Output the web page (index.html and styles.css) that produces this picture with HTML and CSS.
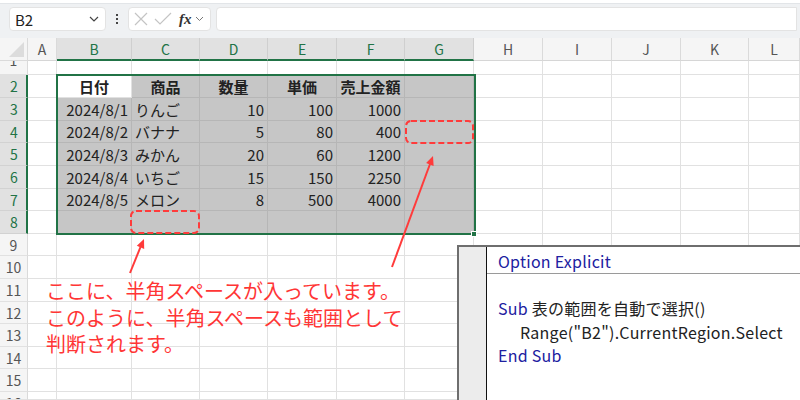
FILE: index.html
```html
<!DOCTYPE html>
<html lang="ja">
<head>
<meta charset="utf-8">
<link rel="stylesheet" href="styles.css">
</head>
<body>
<div class="app">
  <div class="topbar">
    <div class="namebox">
      <span class="nb-text">B2</span>
      <svg class="chev" width="10" height="6" viewBox="0 0 10 6"><polyline points="1,1 5,5 9,1" fill="none" stroke="#444" stroke-width="1.2"/></svg>
    </div>
    <div class="vdots"><i></i><i></i><i></i></div>
    <div class="fxbox">
      <svg width="16" height="14" viewBox="0 0 16 14"><path d="M2 1 L14 13 M14 1 L2 13" stroke="#c4c4c4" stroke-width="1.2" fill="none"/></svg>
      <svg width="18" height="14" viewBox="0 0 18 14"><polyline points="1,7 6,12 17,1" stroke="#c4c4c4" stroke-width="1.2" fill="none"/></svg>
      <span class="fx">fx</span>
      <svg class="chev-s" width="9" height="6" viewBox="0 0 9 6"><polyline points="1,1 4.5,4.5 8,1" fill="none" stroke="#777" stroke-width="1"/></svg>
    </div>
    <div class="formula"></div>
  </div>

  <div class="sheetwrap">
    <div class="sheet">
      <div class="corner"><span class="tri"></span></div>
      <div class="ch">A</div><div class="ch on">B</div><div class="ch on">C</div><div class="ch on">D</div><div class="ch on">E</div><div class="ch on">F</div><div class="ch on">G</div><div class="ch">H</div><div class="ch">I</div><div class="ch">J</div><div class="ch">K</div><div class="ch">L</div>

      <div class="rh r1"><span>1</span></div><div class="c"></div><div class="c"></div><div class="c"></div><div class="c"></div><div class="c"></div><div class="c"></div><div class="c"></div><div class="c"></div><div class="c"></div><div class="c"></div><div class="c"></div><div class="c"></div>

      <div class="rh on">2</div><div class="c"></div><div class="c hd act">日付</div><div class="c s hd">商品</div><div class="c s hd">数量</div><div class="c s hd">単価</div><div class="c s hd">売上金額</div><div class="c s"></div><div class="c"></div><div class="c"></div><div class="c"></div><div class="c"></div><div class="c"></div>

      <div class="rh on">3</div><div class="c"></div><div class="c s n">2024/8/1</div><div class="c s t">りんご</div><div class="c s n">10</div><div class="c s n">100</div><div class="c s n">1000</div><div class="c s"></div><div class="c"></div><div class="c"></div><div class="c"></div><div class="c"></div><div class="c"></div>

      <div class="rh on">4</div><div class="c"></div><div class="c s n">2024/8/2</div><div class="c s t">バナナ</div><div class="c s n">5</div><div class="c s n">80</div><div class="c s n">400</div><div class="c s"></div><div class="c"></div><div class="c"></div><div class="c"></div><div class="c"></div><div class="c"></div>

      <div class="rh on">5</div><div class="c"></div><div class="c s n">2024/8/3</div><div class="c s t">みかん</div><div class="c s n">20</div><div class="c s n">60</div><div class="c s n">1200</div><div class="c s"></div><div class="c"></div><div class="c"></div><div class="c"></div><div class="c"></div><div class="c"></div>

      <div class="rh on">6</div><div class="c"></div><div class="c s n">2024/8/4</div><div class="c s t">いちご</div><div class="c s n">15</div><div class="c s n">150</div><div class="c s n">2250</div><div class="c s"></div><div class="c"></div><div class="c"></div><div class="c"></div><div class="c"></div><div class="c"></div>

      <div class="rh on">7</div><div class="c"></div><div class="c s n">2024/8/5</div><div class="c s t">メロン</div><div class="c s n">8</div><div class="c s n">500</div><div class="c s n">4000</div><div class="c s"></div><div class="c"></div><div class="c"></div><div class="c"></div><div class="c"></div><div class="c"></div>

      <div class="rh on">8</div><div class="c"></div><div class="c s"></div><div class="c s"></div><div class="c s"></div><div class="c s"></div><div class="c s"></div><div class="c s"></div><div class="c"></div><div class="c"></div><div class="c"></div><div class="c"></div><div class="c"></div>

      <div class="rh">9</div><div class="c"></div><div class="c"></div><div class="c"></div><div class="c"></div><div class="c"></div><div class="c"></div><div class="c"></div><div class="c"></div><div class="c"></div><div class="c"></div><div class="c"></div><div class="c"></div>
      <div class="rh">10</div><div class="c"></div><div class="c"></div><div class="c"></div><div class="c"></div><div class="c"></div><div class="c"></div><div class="c"></div><div class="c"></div><div class="c"></div><div class="c"></div><div class="c"></div><div class="c"></div>
      <div class="rh">11</div><div class="c"></div><div class="c"></div><div class="c"></div><div class="c"></div><div class="c"></div><div class="c"></div><div class="c"></div><div class="c"></div><div class="c"></div><div class="c"></div><div class="c"></div><div class="c"></div>
      <div class="rh">12</div><div class="c"></div><div class="c"></div><div class="c"></div><div class="c"></div><div class="c"></div><div class="c"></div><div class="c"></div><div class="c"></div><div class="c"></div><div class="c"></div><div class="c"></div><div class="c"></div>
      <div class="rh">13</div><div class="c"></div><div class="c"></div><div class="c"></div><div class="c"></div><div class="c"></div><div class="c"></div><div class="c"></div><div class="c"></div><div class="c"></div><div class="c"></div><div class="c"></div><div class="c"></div>
      <div class="rh">14</div><div class="c"></div><div class="c"></div><div class="c"></div><div class="c"></div><div class="c"></div><div class="c"></div><div class="c"></div><div class="c"></div><div class="c"></div><div class="c"></div><div class="c"></div><div class="c"></div>
      <div class="rh">15</div><div class="c"></div><div class="c"></div><div class="c"></div><div class="c"></div><div class="c"></div><div class="c"></div><div class="c"></div><div class="c"></div><div class="c"></div><div class="c"></div><div class="c"></div><div class="c"></div>
      <div class="rh last"><span>16</span></div><div class="c"></div><div class="c"></div><div class="c"></div><div class="c"></div><div class="c"></div><div class="c"></div><div class="c"></div><div class="c"></div><div class="c"></div><div class="c"></div><div class="c"></div><div class="c"></div>
    </div>

    <div class="selbox"></div>
    <div class="handle"></div>

    <svg class="annot" width="800" height="400" viewBox="0 0 800 400">
      <rect x="131" y="211" width="68" height="22" rx="5" ry="5" fill="none" stroke="#ff3b3b" stroke-width="2" stroke-dasharray="6 3"/>
      <rect x="406" y="121" width="67" height="22" rx="5" ry="5" fill="none" stroke="#ff3b3b" stroke-width="2" stroke-dasharray="6 3"/>
      <line x1="130" y1="273" x2="140.5" y2="247" stroke="#ff3b3b" stroke-width="2"/>
      <polygon points="144,239 144.2,249 136.8,245.7" fill="#ff3b3b"/>
      <line x1="392" y1="267" x2="430" y2="164" stroke="#ff3b3b" stroke-width="2"/>
      <polygon points="433,156 433.6,166 426.1,163" fill="#ff3b3b"/>
    </svg>

    <div class="note">ここに、半角スペースが入っています。<br>このように、半角スペースも範囲として<br>判断されます。</div>

    <div class="vbe">
      <div class="margin"></div>
      <div class="code">
        <div class="decl"><span class="kw">Option Explicit</span></div>
        <div class="ln">&nbsp;</div>
        <div class="ln"><span class="kw">Sub</span> 表の範囲を自動で選択()</div>
        <div class="ln ind">Range("B2").CurrentRegion.Select</div>
        <div class="ln"><span class="kw">End Sub</span></div>
      </div>
    </div>
  </div>
</div>
</body>
</html>
```

FILE: styles.css
```css
* { box-sizing: border-box; }
html, body {
  margin: 0;
  padding: 0;
  width: 800px;
  height: 400px;
  overflow: hidden;
  background: #ffffff;
  font-family: "Noto Sans CJK JP", "Noto Sans", sans-serif;
}
.app {
  width: 800px;
  height: 400px;
  display: flex;
  flex-direction: column;
}
.topbar {
  height: 35px;
  flex: none;
  background: #eff1f3;
  border-top: 1px solid #e2e5e8;
  margin-top: 3px;
  display: flex;
  align-items: flex-start;
  padding: 3px 0 0 9px;
}
.namebox {
  width: 97px;
  height: 24px;
  background: #fff;
  border: 1px solid #e3e3e3;
  border-radius: 4px;
  display: flex;
  align-items: center;
  justify-content: space-between;
  padding: 0 6px 0 5px;
}
.nb-text { font-size: 15px; color: #222; }
.vdots {
  width: 22px;
  height: 24px;
  display: flex;
  flex-direction: column;
  align-items: center;
  justify-content: center;
  gap: 2px;
}
.vdots i {
  width: 2px;
  height: 2px;
  background: #444;
  display: block;
}
.fxbox {
  width: 83px;
  height: 24px;
  background: #fff;
  border: 1px solid #e3e3e3;
  border-radius: 4px;
  display: flex;
  align-items: center;
  gap: 5px;
  padding-left: 4px;
}
.fx {
  font-family: "Liberation Serif", serif;
  font-style: italic;
  font-weight: bold;
  font-size: 15px;
  color: #333;
  margin-left: 2px;
}
.chev-s { margin-left: -2px; }
.formula {
  flex: 1;
  height: 24px;
  margin-left: 5px;
  margin-right: 3px;
  background: #fff;
  border: 1px solid #e3e3e3;
  border-radius: 4px 0 0 4px;
}

.sheetwrap {
  position: relative;
  flex: 1;
}
.sheet {
  display: grid;
  grid-template-columns: 28px 29px 75px 68px 68px 69px 68px 69px 69px 69px 69px 68px 51px;
  grid-template-rows: 23px 14px 23px 23px 22px 23px 23px 22px 23px 22px 23px 23px 22px 23px 22px 23px 8px;
}
.corner {
  background: #f5f5f5;
  border-right: 1px solid #dadada;
  border-bottom: 1px solid #dadada;
  position: relative;
  overflow: hidden;
}
.tri {
  position: absolute;
  right: 3px;
  bottom: 3px;
  width: 0;
  height: 0;
  border-left: 15px solid transparent;
  border-bottom: 15px solid #dcdcdc;
}
.ch {
  background: #f5f5f5;
  border-right: 1px solid #dadada;
  border-bottom: 1px solid #d6d6d6;
  font-size: 14px;
  color: #555;
  display: flex;
  align-items: center;
  justify-content: center;
}
.ch.on {
  background: #e1e1e1;
  color: #217346;
  border-bottom: 2px solid #217346;
  border-right-color: #cfcfcf;
}
.rh {
  background: #f5f5f5;
  border-right: 1px solid #dadada;
  border-bottom: 1px solid #e1e1e1;
  font-size: 14px;
  color: #555;
  display: flex;
  align-items: center;
  justify-content: center;
  overflow: hidden;
}
.rh.on {
  background: #e1e1e1;
  color: #217346;
  border-right: 2px solid #217346;
  border-bottom-color: #d2d2d2;
  padding-left: 2px;
}
.rh.r1 {
  align-items: flex-start;
}
.rh.r1 span {
  line-height: 22px;
  margin-top: -12px;
}
.rh.last {
  align-items: flex-start;
}
.rh.last span {
  line-height: 22px;
}
.c {
  border-right: 1px solid #e1e1e1;
  border-bottom: 1px solid #e1e1e1;
  font-size: 15px;
  color: #222;
  display: flex;
  align-items: center;
  white-space: nowrap;
  overflow: hidden;
}
.c.s {
  background: #c6c6c6;
  border-right-color: #b6b6b6;
  border-bottom-color: #b6b6b6;
}
.c.act {
  background: #fff;
}
.c.hd {
  font-weight: bold;
  justify-content: center;
}
.c.n {
  justify-content: flex-end;
  padding-right: 3px;
}
.c.t {
  padding-left: 3px;
}

.selbox {
  position: absolute;
  left: 56px;
  top: 36px;
  width: 420px;
  height: 161px;
  border: 2px solid #217346;
  pointer-events: none;
}
.handle {
  position: absolute;
  left: 471px;
  top: 193px;
  width: 6px;
  height: 6px;
  background: #217346;
  border: 1px solid #fff;
}
.annot {
  position: absolute;
  left: 0;
  top: -38px;
  pointer-events: none;
}
.note {
  position: absolute;
  left: 46px;
  top: 240px;
  font-size: 20px;
  line-height: 26.5px;
  color: #ff3535;
  white-space: nowrap;
}

.vbe {
  position: absolute;
  left: 457px;
  top: 207px;
  width: 360px;
  height: 170px;
  border-left: 2px solid #6e6e6e;
  border-top: 2px solid #6e6e6e;
  background: #fff;
  display: flex;
}
.margin {
  width: 28px;
  flex: none;
  background: #ececec;
  border-right: 1px solid #111;
}
.code {
  flex: 1;
  padding-top: 3px;
  font-size: 16px;
  letter-spacing: 0.25px;
  color: #222;
}
.decl {
  height: 24px;
  line-height: 23px;
  padding-left: 11px;
  border-bottom: 1px solid #9a9a9a;
}
.ln {
  height: 23.3px;
  line-height: 23px;
  padding-left: 11px;
  white-space: nowrap;
}
.ln.ind { padding-left: 33px; }
.kw { color: #2020a0; }
```
